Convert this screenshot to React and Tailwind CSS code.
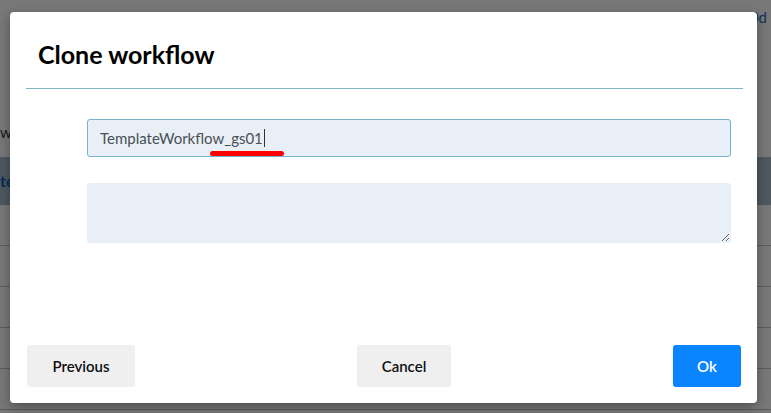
import { useState } from 'react';

const font = { fontFamily: '"Source Sans Pro", Lato, "Noto Sans", sans-serif' };

const Backdrop = () => (
  <div className="h-[413px] w-[771px] overflow-hidden bg-white">
    <div className="flex justify-end pr-1 pt-[6px] text-[15px] text-[#1f6fbf]">idi00d</div>
    <div className="pl-0 pt-[92px] text-[15px] text-[#333]">w</div>
    <div className="mt-[14px] h-[48px] bg-[#a9bbcd] pl-0 pt-[12px] text-[16px] font-bold text-[#0b5bb5]">te</div>
    {[0, 1, 2, 3, 4].map((i) => (
      <div key={i} className="h-[41px] border-b border-[#b7c5d3]" />
    ))}
  </div>
);

export default function App() {
  const [name, setName] = useState('TemplateWorkflow_gs01');
  const [desc, setDesc] = useState('');

  return (
    <div className="relative h-[413px] w-[771px] overflow-hidden" style={font}>
      <Backdrop />
      <div className="absolute inset-0 bg-black/[0.53]" />

      {/* Modal */}
      <div className="absolute left-[10px] top-[12px] flex h-[391px] w-[747px] flex-col rounded-[4px] bg-white shadow-[0_4px_12px_rgba(0,0,0,0.35)]">
        <div className="ml-[16px] mr-[14px] border-b border-[#7ab8c4] pb-[20px] pl-[12px] pt-[29px]">
          <h2 className="text-[25px] font-bold leading-[27px] text-black">Clone workflow</h2>
        </div>

        <div className="flex flex-col gap-[26px] pl-[77px] pr-[26px] pt-[30px]">
          <div className="relative">
            <input
              value={name}
              onChange={(e) => setName(e.target.value)}
              className="h-[38px] w-full rounded-[3px] border border-[#74b6c8] bg-[#e8eff7] px-[12px] text-[15px] text-[#4a4f55] caret-transparent outline-none"
              style={font}
            />
            <span className="absolute left-[177px] top-[10px] h-[18px] w-px bg-[#333]" />
            <span className="absolute left-[123px] top-[32px] h-[5px] w-[74px] rounded-full bg-[#ff0000]" />
          </div>
          <textarea
            value={desc}
            onChange={(e) => setDesc(e.target.value)}
            className="h-[60px] w-full rounded-[3px] border border-[#e6edf5] bg-[#e8eff7] px-[12px] py-[8px] text-[15px] text-[#4a4f55] outline-none"
            style={font}
          />
        </div>

        <div className="mt-auto flex items-center justify-between pb-[16px] pl-[17px] pr-[16px]">
          <button className="h-[42px] w-[108px] rounded-[3px] bg-[#efefef] text-[15px] font-semibold text-[#111]">
            Previous
          </button>
          <button className="h-[42px] w-[94px] rounded-[3px] bg-[#efefef] text-[15px] font-semibold text-[#111]">
            Cancel
          </button>
          <button className="h-[42px] w-[68px] rounded-[3px] bg-[#0a84ff] text-[15px] font-semibold text-white">
            Ok
          </button>
        </div>
      </div>
    </div>
  );
}
